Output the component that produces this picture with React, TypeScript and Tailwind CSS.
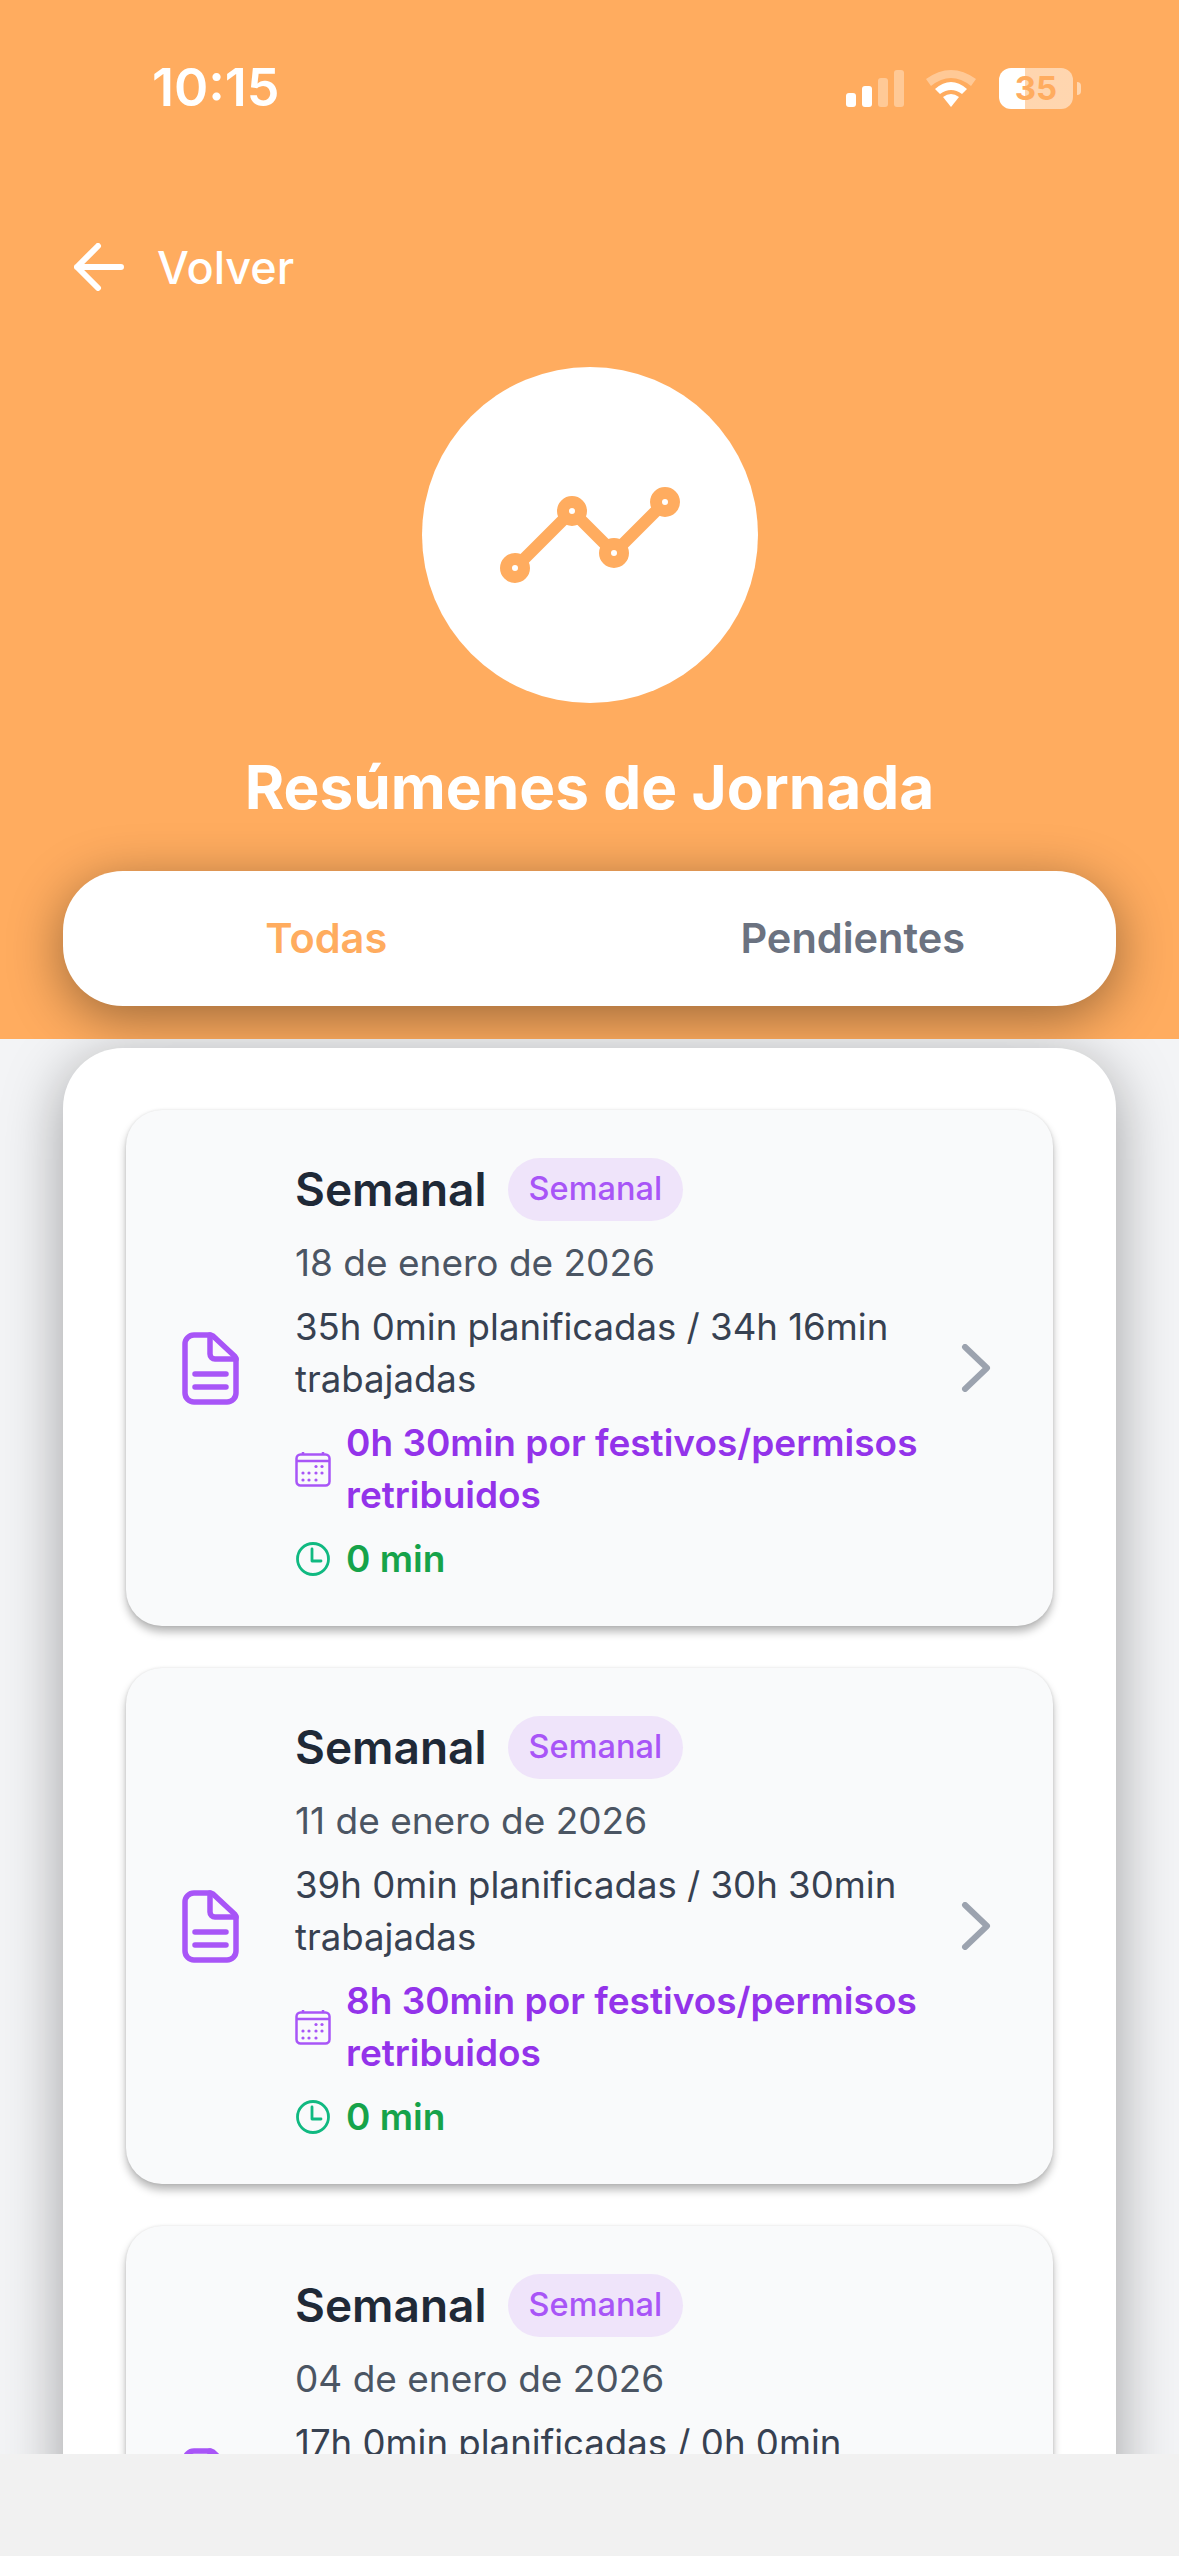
const summaries = [
  { date: '18 de enero de 2026', hours: '35h 0min planificadas / 34h 16min trabajadas', paid: '0h 30min por festivos/permisos retribuidos' },
  { date: '11 de enero de 2026', hours: '39h 0min planificadas / 30h 30min trabajadas', paid: '8h 30min por festivos/permisos retribuidos' },
  { date: '04 de enero de 2026', hours: '17h 0min planificadas / 0h 0min trabajadas', paid: '0h 0min por festivos/permisos retribuidos' },
];

function StatusIcons() {
  return (
    <div className="flex items-center">
      <svg width="58" height="37" viewBox="0 0 58 37" className="fill-white">
        <rect x="0" y="23" width="10" height="14" rx="3" />
        <rect x="16" y="16" width="10" height="21" rx="3" />
        <rect x="32" y="8" width="10" height="29" rx="3" opacity="0.35" />
        <rect x="48" y="0" width="10" height="37" rx="3" opacity="0.35" />
      </svg>
      <svg width="50" height="37" viewBox="0 0 50 37" className="ml-[22px] fill-white">
        <path d="M0 9Q25 -9 50 9L45 16Q25 0 5 16Z" opacity="0.35" />
        <path d="M9 19Q25 5 41 19L36 24Q25 16 14 24Z" />
        <path d="M17 27Q25 21 33 27L25 37Z" />
      </svg>
      <div className="ml-[23px] w-[74px] h-[41px] rounded-[12px] flex items-center justify-center bg-[linear-gradient(90deg,#fff_35%,rgba(255,255,255,0.5)_35%)] text-[33px] font-bold leading-none text-[#ffac5f]">
        35
      </div>
      <div className="ml-[4px] w-[4px] h-[13px] rounded-r-full bg-white/50" />
    </div>
  );
}

function TrendIcon() {
  return (
    <svg width="180" height="96" viewBox="0 0 180 96" fill="none" className="stroke-[#ffac5f]">
      <path d="M15 81L72 24L114 66L165 15" strokeWidth="12" />
      <circle cx="15" cy="81" r="9" strokeWidth="12" fill="#fff" />
      <circle cx="72" cy="24" r="9" strokeWidth="12" fill="#fff" />
      <circle cx="114" cy="66" r="9" strokeWidth="12" fill="#fff" />
      <circle cx="165" cy="15" r="9" strokeWidth="12" fill="#fff" />
    </svg>
  );
}

function FileIcon() {
  return (
    <svg width="57" height="73" viewBox="0 0 57 73" fill="none" className="stroke-[#a855f7]" strokeWidth="5.5" strokeLinecap="round" strokeLinejoin="round">
      <path d="M28 3H12a9 9 0 0 0-9 9V61a9 9 0 0 0 9 9H45a9 9 0 0 0 9-9V27a4 4 0 0 0-1-2.5L31 4a5 5 0 0 0-3-1Z" />
      <path d="M28 3V22a5 5 0 0 0 5 5H54" />
      <path d="M13 42H44M13 55H44" />
    </svg>
  );
}

function CalendarIcon() {
  return (
    <svg width="36" height="36" viewBox="0 0 36 36" fill="none" className="shrink-0 stroke-[#a855f7]" strokeWidth="2.5">
      <rect x="1.5" y="3.5" width="33" height="31" rx="4" />
      <path d="M1.5 10H34.5M8 1V4M28 1V4" />
      <g className="fill-[#a855f7]" stroke="none">
        <circle cx="21" cy="15.5" r="1.6" />
        <circle cx="27" cy="15.5" r="1.6" />
        <circle cx="8" cy="22" r="1.6" />
        <circle cx="14" cy="22" r="1.6" />
        <circle cx="21" cy="22" r="1.6" />
        <circle cx="27" cy="22" r="1.6" />
        <circle cx="8" cy="29" r="1.6" />
        <circle cx="14" cy="29" r="1.6" />
        <circle cx="21" cy="29" r="1.6" />
      </g>
    </svg>
  );
}

function ClockIcon() {
  return (
    <svg width="36" height="36" viewBox="0 0 36 36" fill="none" className="shrink-0 stroke-[#10b981]" strokeWidth="2.8" strokeLinecap="round" strokeLinejoin="round">
      <circle cx="18" cy="18" r="15.5" />
      <path d="M17 8V20H26" />
    </svg>
  );
}

function SummaryCard({ date, hours, paid }: { date: string; hours: string; paid: string }) {
  return (
    <div className="flex items-center shrink-0 h-[516px] pl-[48px] pr-[62px] rounded-[36px] bg-[#f9fafb] shadow-[0_6px_9px_rgba(0,0,0,0.28),0_0_3px_rgba(0,0,0,0.1)]">
      <div className="w-[72px] shrink-0 flex justify-center">
        <FileIcon />
      </div>
      <div className="flex-1 min-w-0 ml-[49px] pt-[6px] pr-[18px]">
        <div className="flex items-center gap-[21px]">
          <span className="text-[46px] font-semibold leading-[63px] text-[#1f2937]">Semanal</span>
          <span className="h-[63px] px-[21px] flex items-center rounded-full bg-[#efe4fa] text-[32.5px] font-medium text-[#a855f7]">
            Semanal
          </span>
        </div>
        <p className="mt-[16px] text-[37px] leading-[52px] text-[#4b5563]">{date}</p>
        <p className="mt-[12px] text-[36.6px] leading-[52px] text-[#374151]">{hours}</p>
        <div className="mt-[12px] flex items-center gap-[15px]">
          <CalendarIcon />
          <p className="text-[37px] leading-[52px] font-semibold text-[#9333ea]">{paid}</p>
        </div>
        <div className="mt-[12px] flex items-center gap-[15px]">
          <ClockIcon />
          <p className="text-[37px] leading-[52px] font-semibold text-[#16a34a]">0 min</p>
        </div>
      </div>
      <svg width="30" height="48" viewBox="0 0 30 48" fill="none" className="shrink-0 stroke-[#9ca3af]" strokeWidth="6" strokeLinecap="round" strokeLinejoin="round">
        <path d="M4 3L26 24L4 45" />
      </svg>
    </div>
  );
}

export default function App() {
  return (
    <div className="flex flex-col w-[1179px] h-[2556px] overflow-hidden bg-[#f1f1f1] font-['Inter',sans-serif]">
      <div className="flex-1 min-h-0 flex flex-col overflow-hidden bg-[#f3f4f6]">
        <header className="relative z-10 h-[1039px] shrink-0 overflow-hidden bg-[#ffac5f] flex flex-col">
          {/* Status bar */}
          <div className="mt-[60px] h-[56px] pl-[152px] pr-[98px] flex items-center justify-between text-white">
            <span className="text-[52px] font-semibold leading-none">10:15</span>
            <StatusIcons />
          </div>

          <div className="mt-[123px] h-[56px] pl-[74px] flex items-center text-white">
            <svg width="50" height="48" viewBox="0 0 50 48" fill="none" stroke="#fff" strokeWidth="6" strokeLinecap="round" strokeLinejoin="round">
              <path d="M24 3L3 24L24 45M3 24H47" />
            </svg>
            <span className="ml-[33px] text-[45px] font-medium leading-none">Volver</span>
          </div>

          <div className="mt-[72px] mx-auto w-[336px] h-[336px] rounded-full bg-white flex items-center justify-center">
            <TrendIcon />
          </div>

          <h1 className="mt-[49px] text-center text-[60.3px] font-bold leading-[72px] text-white">Resúmenes de Jornada</h1>

          <div className="mt-[47px] mx-[63px] h-[135px] rounded-[60px] bg-white grid grid-cols-2 items-center text-center text-[41.5px] font-semibold shadow-[0_12px_54px_rgba(0,0,0,0.4)]">
            <span className="text-[#ffac5f]">Todas</span>
            <span className="text-[#6b7280]">Pendientes</span>
          </div>
        </header>

        <main className="px-[63px] pt-[9px] flex-1 min-h-0">
          <div className="flex flex-col gap-[42px] rounded-[60px] bg-white px-[63px] pt-[62px] pb-[62px] shadow-[0_12px_60px_rgba(0,0,0,0.35)]">
            {summaries.map((s) => (
              <SummaryCard key={s.date} date={s.date} hours={s.hours} paid={s.paid} />
            ))}
          </div>
        </main>
      </div>
      <div className="h-[102px] shrink-0 bg-[#f1f1f1]" />
    </div>
  );
}
